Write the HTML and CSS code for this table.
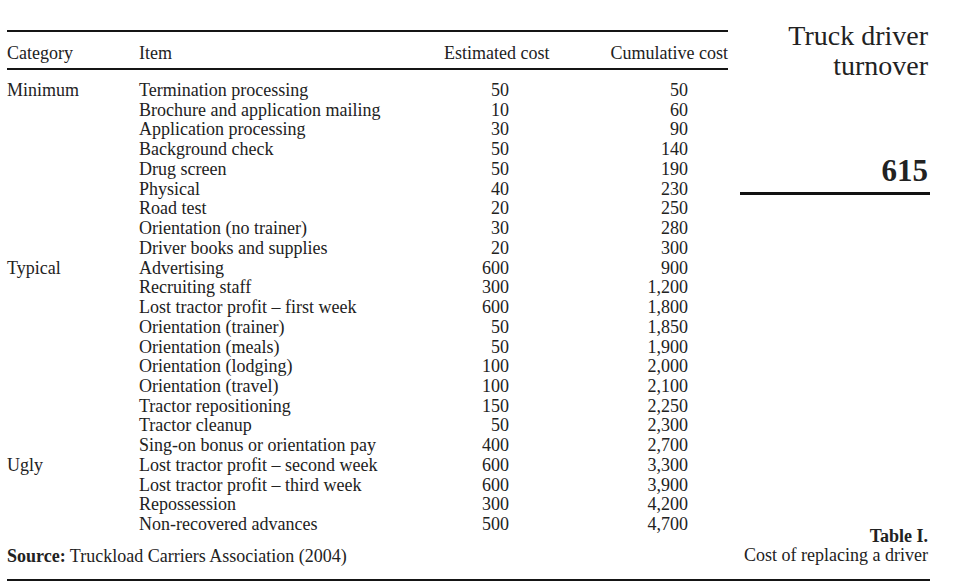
FILE: index.html
```html
<!DOCTYPE html>
<html lang="en">
<head>
<meta charset="utf-8">
<title>Truck driver turnover – Table I</title>
<link rel="stylesheet" href="styles.css">
</head>
<body>
<div class="page">
  <div class="main">
    <div class="left">
      <table class="costs">
        <colgroup>
          <col class="c-cat"><col class="c-item"><col class="c-est"><col class="c-cum">
        </colgroup>
        <thead>
          <tr>
            <th class="cat">Category</th>
            <th class="item">Item</th>
            <th class="est">Estimated cost</th>
            <th class="cum">Cumulative cost</th>
          </tr>
        </thead>
        <tbody>
          <tr class="first"><td>Minimum</td><td>Termination processing</td><td class="num est">50</td><td class="num cum">50</td></tr>
          <tr><td></td><td>Brochure and application mailing</td><td class="num est">10</td><td class="num cum">60</td></tr>
          <tr><td></td><td>Application processing</td><td class="num est">30</td><td class="num cum">90</td></tr>
          <tr><td></td><td>Background check</td><td class="num est">50</td><td class="num cum">140</td></tr>
          <tr><td></td><td>Drug screen</td><td class="num est">50</td><td class="num cum">190</td></tr>
          <tr><td></td><td>Physical</td><td class="num est">40</td><td class="num cum">230</td></tr>
          <tr><td></td><td>Road test</td><td class="num est">20</td><td class="num cum">250</td></tr>
          <tr><td></td><td>Orientation (no trainer)</td><td class="num est">30</td><td class="num cum">280</td></tr>
          <tr><td></td><td>Driver books and supplies</td><td class="num est">20</td><td class="num cum">300</td></tr>
          <tr><td>Typical</td><td>Advertising</td><td class="num est">600</td><td class="num cum">900</td></tr>
          <tr><td></td><td>Recruiting staff</td><td class="num est">300</td><td class="num cum">1,200</td></tr>
          <tr><td></td><td>Lost tractor profit – first week</td><td class="num est">600</td><td class="num cum">1,800</td></tr>
          <tr><td></td><td>Orientation (trainer)</td><td class="num est">50</td><td class="num cum">1,850</td></tr>
          <tr><td></td><td>Orientation (meals)</td><td class="num est">50</td><td class="num cum">1,900</td></tr>
          <tr><td></td><td>Orientation (lodging)</td><td class="num est">100</td><td class="num cum">2,000</td></tr>
          <tr><td></td><td>Orientation (travel)</td><td class="num est">100</td><td class="num cum">2,100</td></tr>
          <tr><td></td><td>Tractor repositioning</td><td class="num est">150</td><td class="num cum">2,250</td></tr>
          <tr><td></td><td>Tractor cleanup</td><td class="num est">50</td><td class="num cum">2,300</td></tr>
          <tr><td></td><td>Sing-on bonus or orientation pay</td><td class="num est">400</td><td class="num cum">2,700</td></tr>
          <tr><td>Ugly</td><td>Lost tractor profit – second week</td><td class="num est">600</td><td class="num cum">3,300</td></tr>
          <tr><td></td><td>Lost tractor profit – third week</td><td class="num est">600</td><td class="num cum">3,900</td></tr>
          <tr><td></td><td>Repossession</td><td class="num est">300</td><td class="num cum">4,200</td></tr>
          <tr><td></td><td>Non-recovered advances</td><td class="num est">500</td><td class="num cum">4,700</td></tr>
        </tbody>
      </table>
      <p class="source"><b>Source:</b> Truckload Carriers Association (2004)</p>
    </div>
    <aside class="side">
      <div class="running">Truck driver<br>turnover</div>
      <div class="pageno">615</div>
      <div class="side-rule"></div>
      <div class="caption"><b>Table I.</b><br>Cost of replacing a driver</div>
    </aside>
  </div>
  <div class="bottom-rule"></div>
</div>
</body>
</html>
```

FILE: styles.css
```css
html, body {
  margin: 0;
  padding: 0;
  background: #ffffff;
}

body {
  font-family: "Liberation Serif", "Times New Roman", serif;
  color: #222222;
  font-size: 18px;
}

.page {
  width: 923px;
  padding-left: 7px;
}

.main {
  display: flex;
  align-items: stretch;
}

.left {
  width: 721px;
  padding-top: 30px;
}

.costs {
  width: 721px;
  table-layout: fixed;
  border-collapse: collapse;
  border-spacing: 0;
}

.c-cat { width: 132px; }
.c-item { width: 305px; }
.c-est { width: 106px; }
.c-cum { width: 178px; }

.costs thead th {
  font-weight: normal;
  line-height: 20px;
  padding: 11px 0 5px 0;
  border-top: 2px solid #151515;
  border-bottom: 2px solid #151515;
  white-space: nowrap;
}

.costs th.cat, .costs th.item, .costs th.est { text-align: left; }
.costs th.cum { text-align: right; }

.costs td {
  padding: 0;
  line-height: 19.73px;
  height: 19.73px;
  white-space: nowrap;
  vertical-align: top;
}

.costs tr.first td { padding-top: 11px; }

.costs td.num { text-align: right; }
.costs td.est { padding-right: 41px; }
.costs td.cum { padding-right: 40px; }

.source {
  margin: 11px 0 0 0;
  line-height: 20px;
}

.source b { font-weight: bold; }

.side {
  flex: 1;
  margin-left: 12px;
  display: flex;
  flex-direction: column;
  align-items: stretch;
  text-align: right;
  padding-top: 21px;
}

.running {
  font-size: 28px;
  line-height: 30px;
  margin-right: 2px;
}

.pageno {
  font-size: 31px;
  font-weight: bold;
  line-height: 32px;
  margin-top: 74px;
  margin-right: 2px;
}

.side-rule {
  margin-top: 5px;
  height: 3px;
  background: #111111;
}

.caption {
  margin-top: auto;
  line-height: 19px;
  padding-bottom: 1px;
  margin-right: 2px;
}

.bottom-rule {
  margin-top: 13px;
  height: 2px;
  background: #151515;
}
```
